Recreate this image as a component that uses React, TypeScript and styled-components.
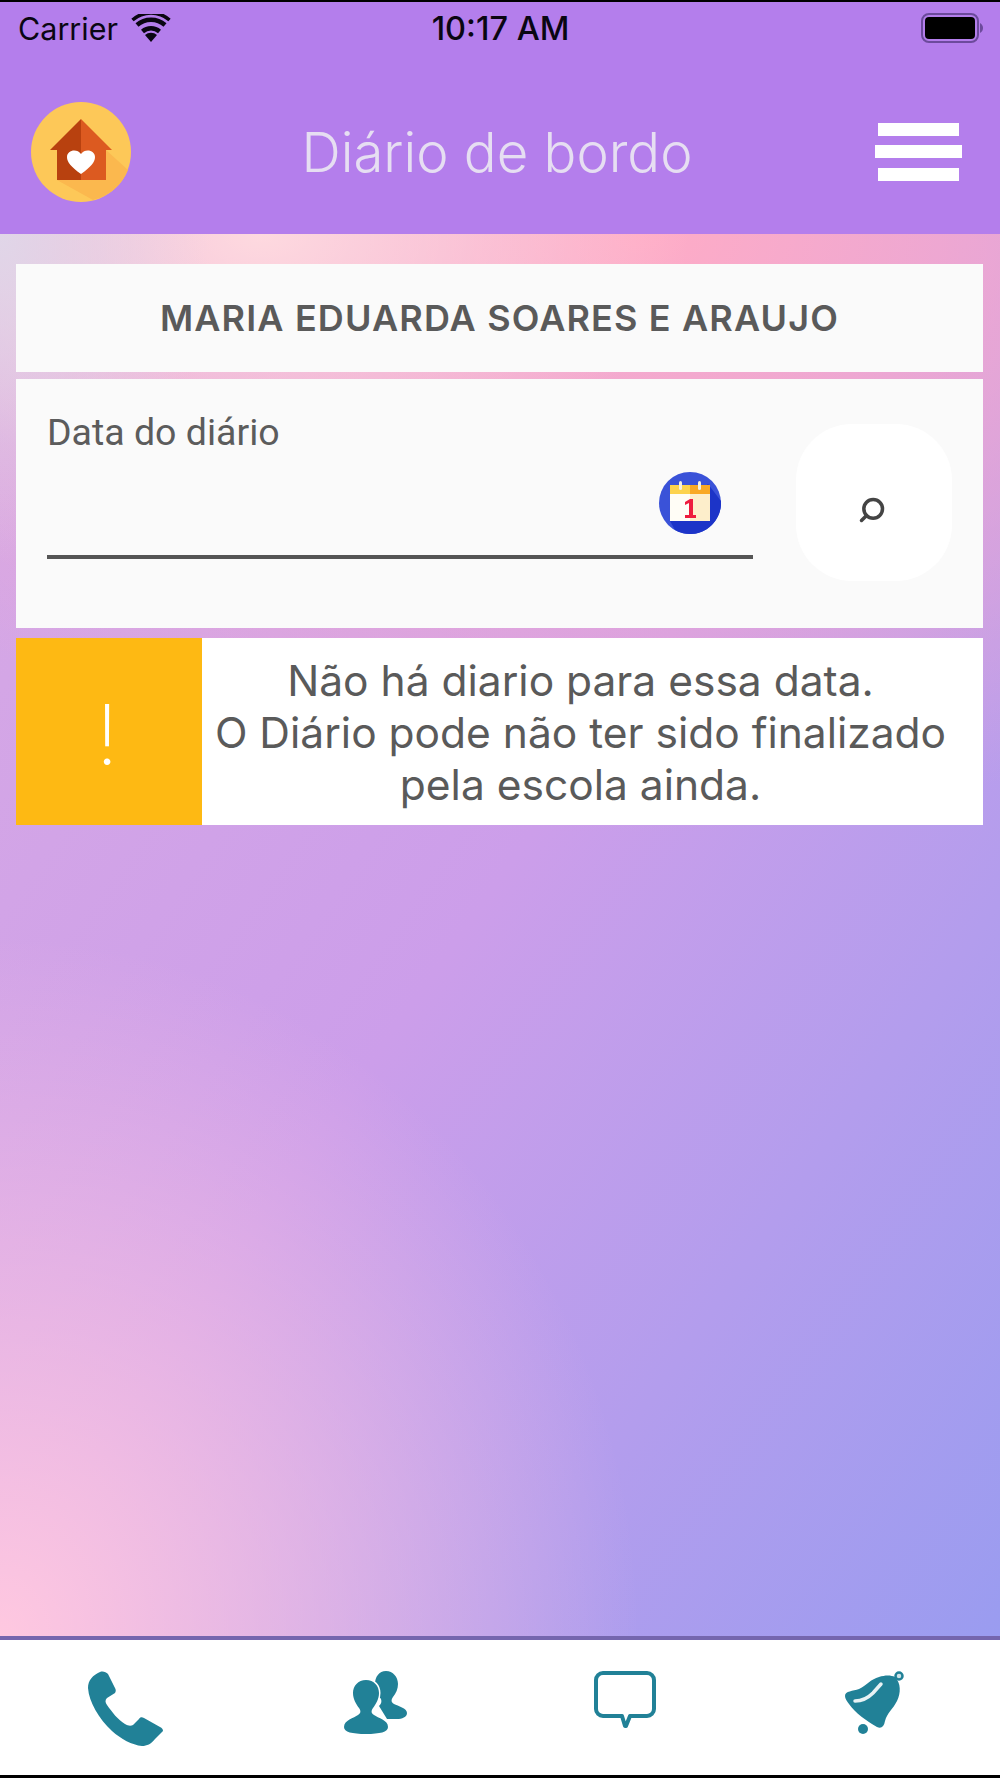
import * as React from 'react';
import styled, { createGlobalStyle } from 'styled-components';
import { Search } from 'lucide-react';

const GlobalStyle = createGlobalStyle`
  html, body {
    margin: 0;
    padding: 0;
    background: #000;
  }
  * {
    box-sizing: border-box;
  }
`;

const Screen = styled.div`
  width: 1000px;
  height: 1778px;
  display: flex;
  flex-direction: column;
  overflow: hidden;
  padding: 2px 0 3px;
  background: #000;
  font-family: Inter, "Liberation Sans", sans-serif;
`;

const Header = styled.header`
  height: 232px;
  flex-shrink: 0;
  background: #b47eec;
  display: flex;
  flex-direction: column;
`;

const StatusBar = styled.div`
  height: 52px;
  display: grid;
  grid-template-columns: 1fr auto 1fr;
  align-items: center;
  padding: 0 17px 0 18px;
  color: #0a0612;
  font-size: 30.5px;
`;

const StatusLeft = styled.div`
  display: flex;
  align-items: center;
  gap: 13px;
`;

const StatusTime = styled.div`
  font-size: 32.5px;
  font-weight: 500;
`;

const StatusRight = styled.div`
  display: flex;
  justify-content: flex-end;
`;

const NavBar = styled.div`
  flex: 1;
  display: flex;
  align-items: center;
  justify-content: space-between;
  padding: 15px 38px 0 31px;
`;

const Title = styled.h1`
  margin: 0 12px 0 0;
  font-size: 54.5px;
  font-weight: 300;
  color: #e6def2;
`;

const Content = styled.main`
  flex: 1;
  display: flex;
  flex-direction: column;
  padding: 30px 17px 0 16px;
  background:
    radial-gradient(ellipse 210px 330px at 0% 0%, rgba(224, 214, 232, 1), rgba(224, 214, 232, 0) 100%),
    radial-gradient(ellipse 430px 260px at 26% 0%, rgba(255, 220, 224, 0.95), rgba(255, 220, 224, 0) 100%),
    radial-gradient(ellipse 900px 600px at 64% 0%, rgba(255, 172, 198, 1), rgba(255, 172, 198, 0) 100%),
    radial-gradient(ellipse 640px 700px at 0% 100%, rgba(255, 200, 224, 1), rgba(255, 200, 224, 0) 100%),
    linear-gradient(125deg, #d8aae4 0%, #cc9eea 48%, #9a9cf0 100%);
`;

const NameCard = styled.div`
  height: 108px;
  background: #fafafa;
  display: flex;
  align-items: center;
  justify-content: center;
  font-size: 36px;
  font-weight: 600;
  color: #5a5a5a;
  letter-spacing: 1.15px;
  padding-bottom: 1px;
`;

const DateCard = styled.div`
  height: 249px;
  margin-top: 7px;
  background: #fafafa;
  display: flex;
  align-items: flex-start;
  padding: 33px 30px 0 31px;
`;

const DateField = styled.div`
  width: 706px;
`;

const DateLabel = styled.div`
  font-family: Roboto, "Liberation Sans", sans-serif;
  font-size: 37.5px;
  line-height: 40px;
  color: #5c5c5c;
`;

const DateInput = styled.div`
  height: 107px;
  border-bottom: 4px solid #555;
  display: flex;
  justify-content: flex-end;
  padding: 20px 32px 0 0;
`;

const SearchButton = styled.button`
  width: 156px;
  height: 157px;
  margin: 12px 0 0 43px;
  border: none;
  border-radius: 56px;
  background: #fff;
  color: #444;
  display: flex;
  align-items: center;
  justify-content: center;
  padding: 14px 4px 0 0;
`;

const FlippedSearch = styled(Search)`
  transform: scaleX(-1);
`;

const AlertCard = styled.div`
  height: 187px;
  margin-top: 10px;
  background: #fff;
  display: flex;
`;

const AlertBadge = styled.div`
  width: 186px;
  background: #feb913;
  color: #fff;
  display: flex;
  align-items: center;
  justify-content: center;
  font-size: 84px;
  font-weight: 200;
  padding: 6px 4px 0 0;
`;

const AlertText = styled.div`
  flex: 1;
  padding: 2px 24px 0 0;
  display: flex;
  align-items: center;
  justify-content: center;
  text-align: center;
  font-size: 42.5px;
  line-height: 52px;
  color: #5a5a5a;
`;

const Footer = styled.footer`
  height: 139px;
  flex-shrink: 0;
  background: #fff;
  border-top: 4px solid #7566ae;
  display: grid;
  grid-template-columns: repeat(4, 1fr);
  padding-top: 31px;
`;

const FooterItem = styled.div`
  display: flex;
  justify-content: center;
  align-items: flex-start;
  color: #218197;
`;

const WifiIcon = () => (
  <svg width="40" height="28" viewBox="0 0 40 28">
    <path d="M20 28l-6-7a9 9 0 0 1 12 0z" fill="#0a0612" />
    <path d="M11.500 17.500a13 13 0 0 1 17 0" fill="none" stroke="#0a0612" strokeWidth="4.500" />
    <path d="M6 11a21 21 0 0 1 28 0" fill="none" stroke="#0a0612" strokeWidth="4.500" />
    <path d="M1.500 6a28 28 0 0 1 37 0" fill="none" stroke="#0a0612" strokeWidth="3.500" />
  </svg>
);

const BatteryIcon = () => (
  <svg width="62" height="30" viewBox="0 0 62 30">
    <rect x="1" y="1" width="56" height="28" rx="7" fill="none" stroke="#6c4a9c" strokeWidth="2" />
    <rect x="4" y="4" width="50" height="22" rx="4" fill="#000" />
    <path d="M59 10c2 1 3 3 3 5s-1 4-3 5z" fill="#6c4a9c" />
  </svg>
);

const HomeLogo = () => (
  <svg width="100" height="100" viewBox="0 0 100 100">
    <circle cx="50" cy="50" r="50" fill="#fdc858" />
    <path d="M75 48L97 68A50 50 0 0 1 62 98L26 78z" fill="#fbb84e" />
    <path d="M50 17L19 48h7v30h24z" fill="#b8410f" />
    <path d="M50 17l31 31h-6v30H50z" fill="#dc5a20" />
    <path d="M50 72C40 65 36 60 36 55c0-7 10-9 14-3 4-6 14-4 14 3 0 5-4 10-14 17z" fill="#fff" />
  </svg>
);

const MenuIcon = () => (
  <svg width="87" height="58" viewBox="0 0 87 58">
    <rect x="3" y="0" width="81" height="13" fill="#fff" />
    <rect x="0" y="22" width="87" height="13" fill="#fff" />
    <rect x="3" y="45" width="81" height="13" fill="#fff" />
  </svg>
);

const CalendarIcon = () => (
  <svg width="62" height="62" viewBox="0 0 62 62">
    <circle cx="31" cy="31" r="31" fill="#3a52d8" />
    <path d="M49 12L62 29A31 31 0 0 1 16 58L11 49z" fill="#1c34c8" />
    <rect x="11" y="13" width="20" height="9" fill="#fdd34e" />
    <rect x="31" y="13" width="20" height="9" fill="#f9a825" />
    <rect x="11" y="22" width="20" height="27" fill="#fffdf6" />
    <rect x="31" y="22" width="20" height="27" fill="#fdeecb" />
    <rect x="20" y="9" width="3" height="9" rx="1.500" fill="#f5f0e0" />
    <rect x="39" y="9" width="3" height="9" rx="1.500" fill="#f5f0e0" />
    <path d="M26 30l5-3h3v16h3v3H26v-3h4V31l-4 2z" fill="#ee1c3e" />
  </svg>
);

const PhoneIcon = () => (
  <svg width="75" height="75" viewBox="0 0 75 75">
    <path
      d="M12 1C5 4 0 9 0 17c1 14 11 31 24 43 9 8 20 14 30 15 5 0 9-2 13-7l8-8c0-2-1-3-3-4L56 47c-2-1-4-1-5 1l-6 6c-2 1-5 1-8-1C30 49 24 41 19 34c-2-3-2-5 0-7l8-5c1-2 1-3 0-5L20 3c-2-2-5-3-8-2z"
      fill="currentColor"
    />
  </svg>
);

const UsersIcon = () => (
  <svg width="63" height="63" viewBox="0 0 63 63">
    <path
      d="M42 0c-7 0-11 6-11 13 0 6 3 11 6 15 1 3 0 5-2 7l8 13h10c5 0 10-2 10-6 0-5-9-7-13-9-3-2-3-4-1-7 3-4 5-8 5-13C54 6 49 0 42 0z"
      fill="currentColor"
    />
    <path
      d="M22 9c-8 0-13 6-13 13 0 6 3 11 6 15 2 3 2 5-1 7-4 3-14 5-14 12 0 5 8 7 22 7s22-2 22-7c0-7-10-9-14-12-3-2-3-4-1-7 3-4 6-9 6-15 0-7-5-13-13-13z"
      fill="currentColor"
      stroke="#fff"
      strokeWidth="3"
      paintOrder="stroke"
    />
  </svg>
);

const ChatIcon = () => (
  <svg width="62" height="58" viewBox="0 0 62 58">
    <path
      d="M9 2h44a7 7 0 0 1 7 7v29a7 7 0 0 1-7 7H36l-4 10h-1l-3-10H9a7 7 0 0 1-7-7V9a7 7 0 0 1 7-7z"
      fill="none"
      stroke="currentColor"
      strokeWidth="4"
      strokeLinejoin="round"
    />
  </svg>
);

const BellIcon = () => (
  <svg width="60" height="63" viewBox="0 0 60 63">
    <circle cx="54" cy="5" r="3.500" fill="#cfe3e8" stroke="currentColor" strokeWidth="2.500" />
    <path
      d="M0 25c0-5 8-5 14-7 8-4 12-10 20-12 6-2 12-2 16 0 6 6 6 16 2 24-4 8-10 12-12 20-1 6-4 8-8 6C22 50 10 42 4 33c-2-3-4-5-4-8z"
      fill="currentColor"
    />
    <path d="M10 30c8 0 13-3 18-8l8-9" fill="none" stroke="#e8f2f4" strokeWidth="3.500" strokeLinecap="round" />
    <circle cx="18" cy="58" r="5" fill="currentColor" />
  </svg>
);

const App: React.FunctionComponent = () => {
  return (
    <Screen>
      <GlobalStyle />
      <Header>
        <StatusBar>
          <StatusLeft>
            Carrier
            <WifiIcon />
          </StatusLeft>
          <StatusTime>10:17 AM</StatusTime>
          <StatusRight>
            <BatteryIcon />
          </StatusRight>
        </StatusBar>
        <NavBar>
          <HomeLogo />
          <Title>Diário de bordo</Title>
          <MenuIcon />
        </NavBar>
      </Header>
      <Content>
        <NameCard>MARIA EDUARDA SOARES E ARAUJO</NameCard>
        <DateCard>
          <DateField>
            <DateLabel>Data do diário</DateLabel>
            <DateInput>
              <CalendarIcon />
            </DateInput>
          </DateField>
          <SearchButton>
            <FlippedSearch size={28} strokeWidth={3} />
          </SearchButton>
        </DateCard>
        <AlertCard>
          <AlertBadge>!</AlertBadge>
          <AlertText>
            Não há diario para essa data.
            <br />
            O Diário pode não ter sido finalizado
            <br />
            pela escola ainda.
          </AlertText>
        </AlertCard>
      </Content>
      <Footer>
        <FooterItem>
          <PhoneIcon />
        </FooterItem>
        <FooterItem>
          <UsersIcon />
        </FooterItem>
        <FooterItem>
          <ChatIcon />
        </FooterItem>
        <FooterItem>
          <BellIcon />
        </FooterItem>
      </Footer>
    </Screen>
  );
};

export default App;
